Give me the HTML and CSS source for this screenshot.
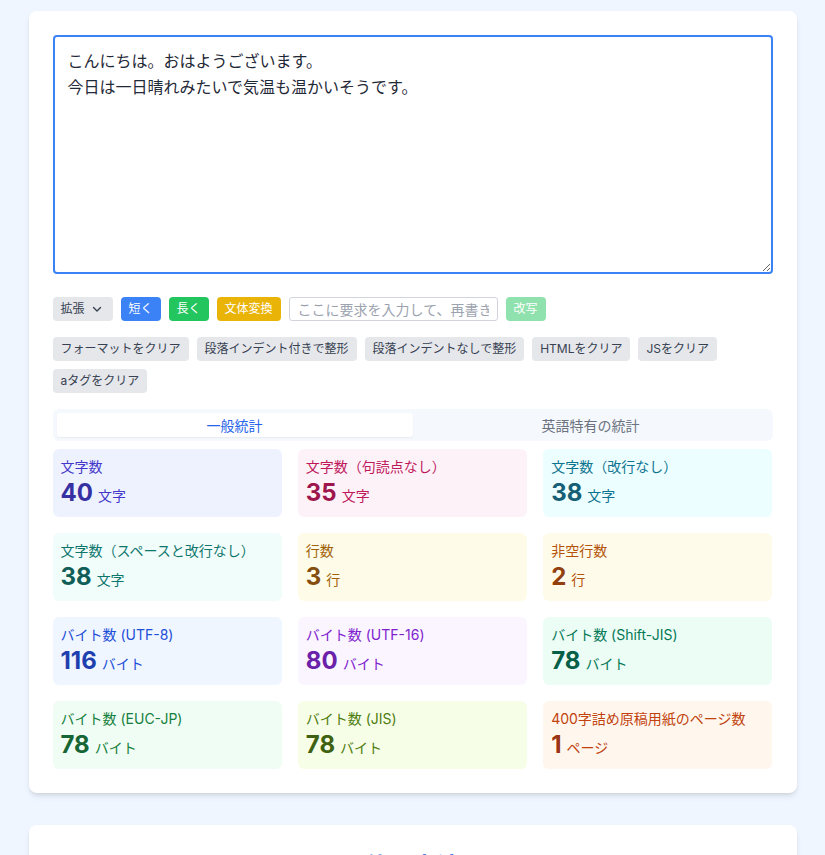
FILE: index.html
```html
<!DOCTYPE html>
<html lang="ja">
<head>
<meta charset="utf-8">
<title>文字数カウント</title>
<link rel="stylesheet" href="styles.css">
</head>
<body>
<main class="wrap">
  <section class="card">
    <textarea class="editor">こんにちは。おはようございます。
今日は一日晴れみたいで気温も温かいそうです。</textarea>

    <div class="toolbar">
      <button class="btn btn-gray btn-expand">拡張
        <svg class="chev" width="12" height="12" viewBox="0 0 12 12"><path d="M2.5 4.5 L6 8 L9.5 4.5" fill="none" stroke="#374151" stroke-width="1.4" stroke-linecap="round" stroke-linejoin="round"/></svg>
      </button>
      <button class="btn btn-blue">短く</button>
      <button class="btn btn-green">長く</button>
      <button class="btn btn-yellow">文体変換</button>
      <input class="prompt" type="text" placeholder="ここに要求を入力して、再書き換えします">
      <button class="btn btn-green btn-disabled">改写</button>
    </div>

    <div class="tools">
      <button class="btn btn-gray">フォーマットをクリア</button>
      <button class="btn btn-gray">段落インデント付きで整形</button>
      <button class="btn btn-gray">段落インデントなしで整形</button>
      <button class="btn btn-gray">HTMLをクリア</button>
      <button class="btn btn-gray">JSをクリア</button>
      <button class="btn btn-gray">aタグをクリア</button>
    </div>

    <div class="tabs">
      <div class="tab tab-active">一般統計</div>
      <div class="tab">英語特有の統計</div>
    </div>

    <div class="stats">
      <div class="stat s-indigo"><div class="label">文字数</div><div class="value"><span class="num">40</span><span class="unit">文字</span></div></div>
      <div class="stat s-pink"><div class="label">文字数（句読点なし）</div><div class="value"><span class="num">35</span><span class="unit">文字</span></div></div>
      <div class="stat s-cyan"><div class="label">文字数（改行なし）</div><div class="value"><span class="num">38</span><span class="unit">文字</span></div></div>

      <div class="stat s-teal"><div class="label">文字数（スペースと改行なし）</div><div class="value"><span class="num">38</span><span class="unit">文字</span></div></div>
      <div class="stat s-yellow"><div class="label">行数</div><div class="value"><span class="num">3</span><span class="unit">行</span></div></div>
      <div class="stat s-amber"><div class="label">非空行数</div><div class="value"><span class="num">2</span><span class="unit">行</span></div></div>

      <div class="stat s-blue"><div class="label">バイト数 (UTF-8)</div><div class="value"><span class="num">116</span><span class="unit">バイト</span></div></div>
      <div class="stat s-purple"><div class="label">バイト数 (UTF-16)</div><div class="value"><span class="num">80</span><span class="unit">バイト</span></div></div>
      <div class="stat s-emerald"><div class="label">バイト数 (Shift-JIS)</div><div class="value"><span class="num">78</span><span class="unit">バイト</span></div></div>

      <div class="stat s-green"><div class="label">バイト数 (EUC-JP)</div><div class="value"><span class="num">78</span><span class="unit">バイト</span></div></div>
      <div class="stat s-lime"><div class="label">バイト数 (JIS)</div><div class="value"><span class="num">78</span><span class="unit">バイト</span></div></div>
      <div class="stat s-orange"><div class="label">400字詰め原稿用紙のページ数</div><div class="value"><span class="num">1</span><span class="unit">ページ</span></div></div>
    </div>
  </section>

  <section class="card card-next">
    <h2 class="heading">使用方法</h2>
  </section>
</main>
</body>
</html>
```

FILE: styles.css
```css
* { box-sizing: border-box; }

html, body {
  margin: 0;
  padding: 0;
}

body {
  background: #eff6ff;
  font-family: Inter, "Noto Sans CJK JP", sans-serif;
  color: #1f2937;
}

.wrap {
  max-width: 768px;
  margin: 0 auto;
  padding: 11px 0 40px;
}

.card {
  background: #ffffff;
  border-radius: 8px;
  box-shadow: 0 4px 6px -1px rgba(0,0,0,0.1), 0 2px 4px -2px rgba(0,0,0,0.1);
  padding: 24px;
}

.card-next {
  margin-top: 32px;
}

.editor {
  display: block;
  width: 100%;
  height: 239px;
  border: 2px solid #3b82f6;
  border-radius: 4px;
  padding: 11px 13px;
  font-family: "Noto Sans CJK JP", sans-serif;
  font-size: 16px;
  line-height: 1.6;
  color: #1f2937;
  resize: vertical;
  outline: none;
  margin: 0;
}

.toolbar {
  display: flex;
  align-items: center;
  gap: 8px;
  margin-top: 23px;
}

.btn {
  display: inline-flex;
  align-items: center;
  height: 24px;
  padding: 0 8px;
  border: none;
  border-radius: 4px;
  font-family: Inter, "Noto Sans CJK JP", sans-serif;
  font-size: 12px;
  line-height: 16px;
  cursor: pointer;
  white-space: nowrap;
}

.btn-gray { background: #e5e7eb; color: #374151; }
.btn-blue { background: #3b82f6; color: #ffffff; }
.btn-green { background: #22c55e; color: #ffffff; }
.btn-yellow { background: #eab308; color: #ffffff; }
.btn-disabled { opacity: 0.5; }

.btn-expand {
  gap: 6px;
  padding: 0 8px 0 8px;
  width: 60px;
}

.chev { display: block; }

.prompt {
  width: 209px;
  height: 24px;
  border: 1px solid #d1d5db;
  border-radius: 3px;
  padding: 0 8px;
  font-family: "Noto Sans CJK JP", sans-serif;
  font-size: 14px;
  color: #374151;
  outline: none;
}

.prompt::placeholder { color: #9ca3af; }

.tools {
  display: flex;
  flex-wrap: wrap;
  gap: 8px;
  margin-top: 16px;
}

.tabs {
  display: grid;
  grid-template-columns: 1fr 1fr;
  background: #f5f8fc;
  border-radius: 6px;
  padding: 4px;
  margin-top: 16px;
}

.tab {
  height: 24px;
  line-height: 24px;
  text-align: center;
  font-size: 14px;
  font-family: "Noto Sans CJK JP", sans-serif;
  color: #6b7280;
  border-radius: 3px;
}

.tab-active {
  background: #ffffff;
  color: #2563eb;
  box-shadow: 0 1px 2px rgba(0,0,0,0.06);
}

.stats {
  display: grid;
  grid-template-columns: repeat(3, 1fr);
  gap: 16px;
  margin-top: 8px;
}

.stat {
  border-radius: 6px;
  padding: 8px;
  height: 68px;
}

.label {
  font-size: 14px;
  line-height: 20px;
  white-space: nowrap;
}

.value {
  display: flex;
  align-items: baseline;
  line-height: 32px;
}

.num {
  font-size: 24px;
  font-weight: 700;
}

.unit {
  font-size: 14px;
  margin-left: 5px;
  font-family: "Noto Sans CJK JP", sans-serif;
}

.s-indigo { background: #eef2ff; } .s-indigo .label, .s-indigo .unit { color: #4338ca; } .s-indigo .num { color: #3730a3; }
.s-pink { background: #fdf2f8; } .s-pink .label, .s-pink .unit { color: #be185d; } .s-pink .num { color: #9d174d; }
.s-cyan { background: #ecfeff; } .s-cyan .label, .s-cyan .unit { color: #0e7490; } .s-cyan .num { color: #155e75; }
.s-teal { background: #f0fdfa; } .s-teal .label, .s-teal .unit { color: #0f766e; } .s-teal .num { color: #115e59; }
.s-yellow { background: #fefce8; } .s-yellow .label, .s-yellow .unit { color: #a16207; } .s-yellow .num { color: #854d0e; }
.s-amber { background: #fffbeb; } .s-amber .label, .s-amber .unit { color: #b45309; } .s-amber .num { color: #92400e; }
.s-blue { background: #eff6ff; } .s-blue .label, .s-blue .unit { color: #1d4ed8; } .s-blue .num { color: #1e40af; }
.s-purple { background: #faf5ff; } .s-purple .label, .s-purple .unit { color: #7e22ce; } .s-purple .num { color: #6b21a8; }
.s-emerald { background: #ecfdf5; } .s-emerald .label, .s-emerald .unit { color: #047857; } .s-emerald .num { color: #065f46; }
.s-green { background: #f0fdf4; } .s-green .label, .s-green .unit { color: #15803d; } .s-green .num { color: #166534; }
.s-lime { background: #f7fee7; } .s-lime .label, .s-lime .unit { color: #4d7c0f; } .s-lime .num { color: #3f6212; }
.s-orange { background: #fff7ed; } .s-orange .label, .s-orange .unit { color: #c2410c; } .s-orange .num { color: #9a3412; }

.heading {
  margin: 0;
  text-align: center;
  font-family: "Noto Sans CJK JP", sans-serif;
  font-size: 24px;
  line-height: 32px;
  font-weight: 700;
  color: #2563eb;
}
```
